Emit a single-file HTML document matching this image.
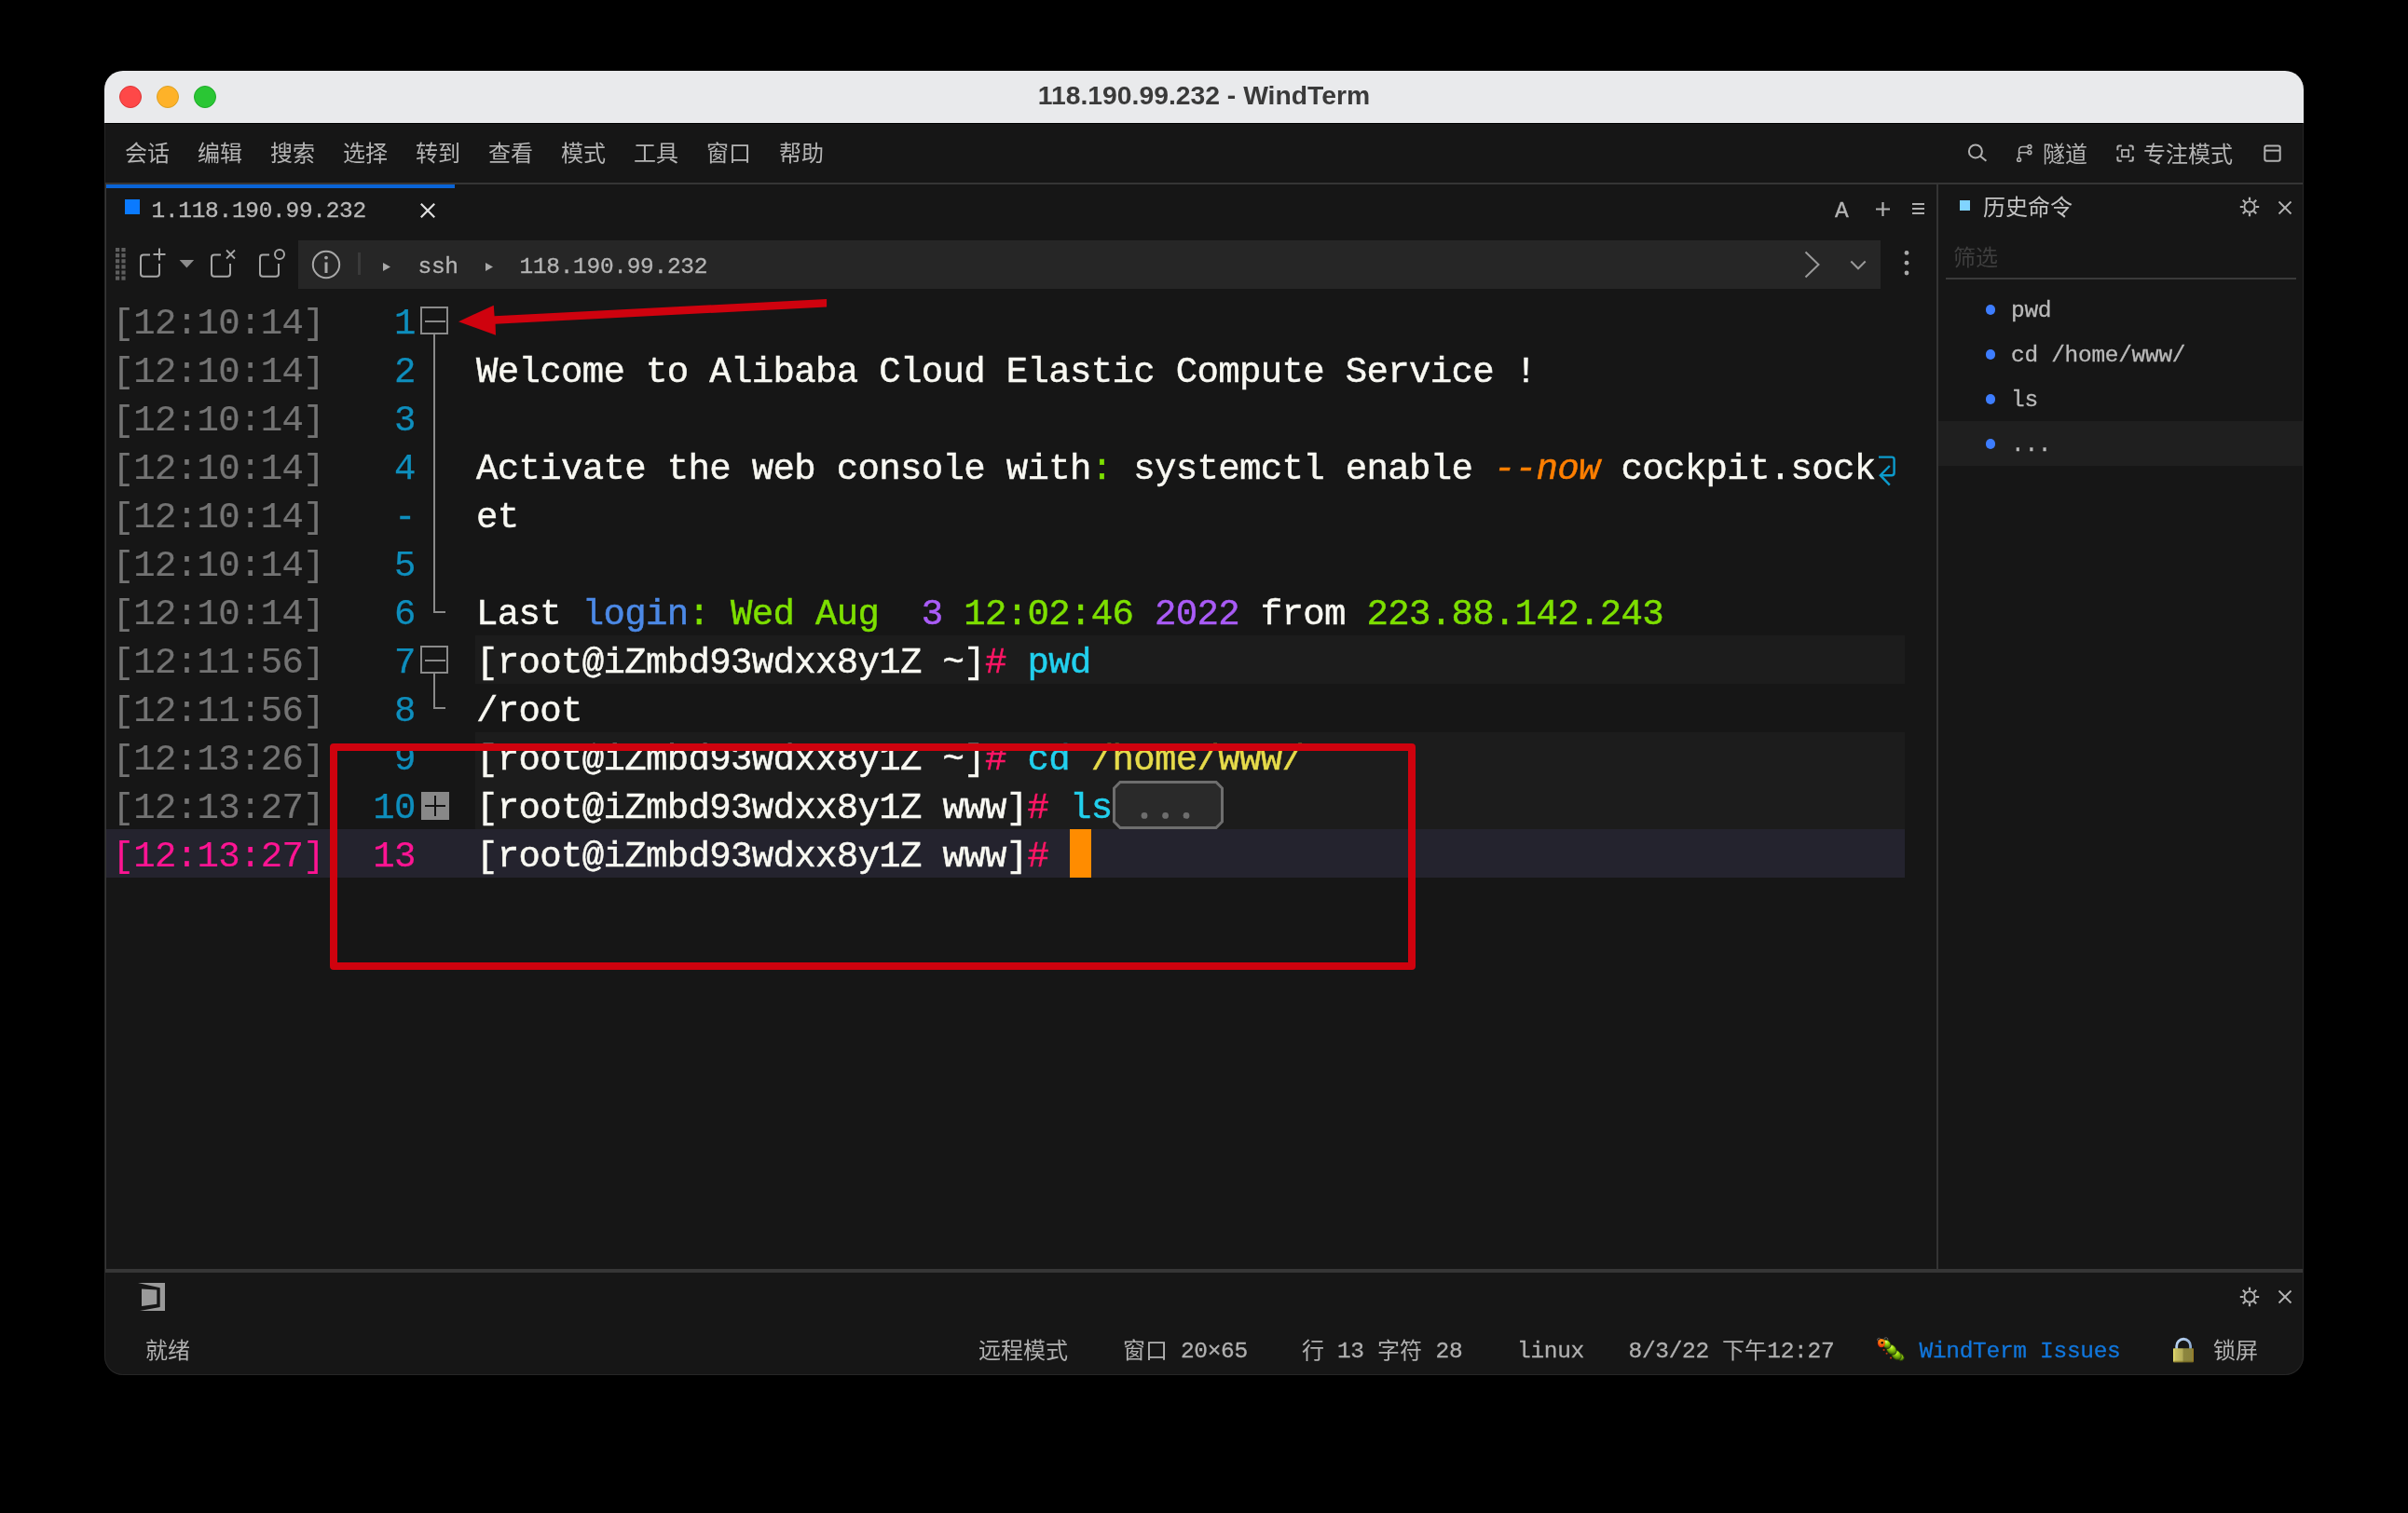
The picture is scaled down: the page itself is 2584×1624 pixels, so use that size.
<!DOCTYPE html>
<html lang="zh-CN"><head><meta charset="utf-8"><title>118.190.99.232 - WindTerm</title>
<style>
*{margin:0;padding:0;box-sizing:border-box}
html,body{width:2584px;height:1624px;background:#000;overflow:hidden}
body{position:relative;font-family:"Liberation Sans",sans-serif}
.abs,.win *{position:absolute}
.win{position:absolute;left:112px;top:76px;width:2360px;height:1400px;border-radius:20px;background:#161616;overflow:hidden}
.page{position:absolute;left:-112px;top:-76px;width:2584px;height:1624px;will-change:transform}
.titlebar{left:112px;top:76px;width:2360px;height:56px;background:#e9eaec}
.tl{width:24px;height:24px;border-radius:50%;top:92px}
.title{left:112px;top:76px;width:2360px;height:56px;line-height:53.5px;text-align:center;font-weight:bold;font-size:28.3px;color:#3a3a3a;white-space:pre}
.m{font-family:"Liberation Mono",monospace;white-space:pre}
.u{font-family:"Liberation Mono","Liberation Sans",sans-serif;font-size:24.5px;letter-spacing:-0.302px;white-space:pre;color:#b4b4b4;line-height:30px;height:30px;-webkit-text-stroke:0.3px}
.c{font-family:"Liberation Sans",sans-serif;font-size:24px;letter-spacing:0;-webkit-text-stroke:0;white-space:pre;color:#b4b4b4;line-height:30px;height:30px}
.u .c{position:static;display:inline}
.row{left:0;width:2584px;height:52px;line-height:52px;font-family:"Liberation Mono",monospace;font-size:39.0px;letter-spacing:-0.654px;white-space:pre;color:#f8f8f2;-webkit-text-stroke:0.5px}
.row span{position:static}
.row .ts{position:absolute;left:120.5px;top:3.5px;color:#737373;-webkit-text-stroke:0.2px}
.row .ln{position:absolute;right:2138.35px;top:3.5px;color:#0e8ebd;text-align:right;-webkit-text-stroke:0.25px}
.row .tx{position:absolute;left:511.0px;top:3.5px}
.bgp{left:510px;width:1534px;height:52px;background:#1c1c1c}
.bgc{left:114px;width:1930px;height:52px;background:#24232e}
.w{color:#f8f8f2} .g{color:#7ddf00} .b{color:#4c89e6} .p{color:#aa5cf7} .k{color:#ff1565} .cy{color:#22d0ee} .y{color:#e6db4a} .o{color:#ff7f00;font-style:italic}
.cur .ts,.cur .ln{color:#ff1493}
svg{overflow:visible}
</style></head>
<body>
<div class="win"><div class="page">
<div class="titlebar"></div>
<div style="left:112px;top:132px;width:2360px;height:1px;background:#000"></div>
<div class="tl" style="left:128px;background:#fe4848;border:1px solid #dc3434"></div>
<div class="tl" style="left:168px;background:#feb229;border:1px solid #dba024"></div>
<div class="tl" style="left:208px;background:#2ac634;border:1px solid #1daa28"></div>
<div class="title">118.190.99.232 - WindTerm</div>
<div class="c" style="left:134px;top:150px">会话</div>
<div class="c" style="left:212px;top:150px">编辑</div>
<div class="c" style="left:290px;top:150px">搜索</div>
<div class="c" style="left:368px;top:150px">选择</div>
<div class="c" style="left:446px;top:150px">转到</div>
<div class="c" style="left:524px;top:150px">查看</div>
<div class="c" style="left:602px;top:150px">模式</div>
<div class="c" style="left:680px;top:150px">工具</div>
<div class="c" style="left:758px;top:150px">窗口</div>
<div class="c" style="left:836px;top:150px">帮助</div>
<svg style="left:2108px;top:150px" width="30" height="30" viewBox="0 0 30 30" fill="none" stroke="#b0b0b0" stroke-width="2"><circle cx="11.9" cy="12.4" r="7"/><path d="M16.9 17.4L23.4 22.8"/></svg>
<svg style="left:2160px;top:150px" width="26" height="30" viewBox="0 0 26 30" fill="none" stroke="#b0b0b0" stroke-width="1.6"><circle cx="6.6" cy="21.4" r="1.9"/><circle cx="17.9" cy="7.5" r="1.9"/><circle cx="17.9" cy="13.7" r="1.9"/><path d="M6.6 19.5V11.5Q6.6 7.5 10.6 7.5H16M6.6 13.7H16"/></svg>
<div class="c" style="left:2192px;top:151px">隧道</div>
<svg style="left:2270px;top:154px" width="22" height="22" viewBox="0 0 22 22" fill="none" stroke="#b0b0b0" stroke-width="2"><path d="M6.8 2.4H3.9Q2.4 2.4 2.4 3.9V7.2M14.4 2.4H17.3Q18.8 2.4 18.8 3.9V7.2M6.8 18.7H3.9Q2.4 18.7 2.4 17.2V13.9M14.4 18.7H17.3Q18.8 18.7 18.8 17.2V13.9"/><rect x="7" y="7" width="7.2" height="7.2" stroke-width="1.8"/></svg>
<div class="c" style="left:2299.5px;top:151px">专注模式</div>
<svg style="left:2428px;top:154px" width="22" height="22" viewBox="0 0 22 22" fill="none" stroke="#b0b0b0" stroke-width="2"><rect x="2.3" y="2.4" width="16.4" height="16.4" rx="2"/><path d="M2.3 7.6H18.7"/></svg>
<div style="left:112px;top:196px;width:2360px;height:2px;background:#353535"></div>
<div style="left:114px;top:198px;width:374px;height:4px;background:#0a64d6"></div>
<div style="left:112px;top:198px;width:2px;height:1164px;background:#383838"></div>
<div style="left:134px;top:214px;width:16px;height:16px;background:#0a7aff"></div>
<div class="u" style="left:162.5px;top:211.5px;color:#b8b8b8">1.118.190.99.232</div>
<svg style="left:451px;top:218px" width="16" height="16" viewBox="0 0 16 16" stroke="#e0e0e0" stroke-width="2.2" fill="none"><path d="M0.8 0.8L15.2 15.2M15.2 0.8L0.8 15.2"/></svg>
<div class="u" style="left:1969px;top:211.5px">A</div>
<svg style="left:2013px;top:217px" width="15" height="15" viewBox="0 0 15 15" stroke="#b0b0b0" stroke-width="2.2" fill="none"><path d="M7.5 0V15M0 7.5H15"/></svg>
<svg style="left:2052px;top:217px" width="13" height="14" viewBox="0 0 13 14" stroke="#b0b0b0" stroke-width="2" fill="none"><path d="M0 2H13M0 7H13M0 12H13"/></svg>
<svg style="left:124px;top:266px" width="11" height="35" viewBox="0 0 11 35" fill="#5e5e5e"><rect x="0.0" y="0.0" width="4.2" height="4.2"/><rect x="6.4" y="0.0" width="4.2" height="4.2"/><rect x="0.0" y="6.1" width="4.2" height="4.2"/><rect x="6.4" y="6.1" width="4.2" height="4.2"/><rect x="0.0" y="12.2" width="4.2" height="4.2"/><rect x="6.4" y="12.2" width="4.2" height="4.2"/><rect x="0.0" y="18.3" width="4.2" height="4.2"/><rect x="6.4" y="18.3" width="4.2" height="4.2"/><rect x="0.0" y="24.4" width="4.2" height="4.2"/><rect x="6.4" y="24.4" width="4.2" height="4.2"/><rect x="0.0" y="30.5" width="4.2" height="4.2"/><rect x="6.4" y="30.5" width="4.2" height="4.2"/></svg>
<svg style="left:0;top:0" width="2584" height="400" viewBox="0 0 2584 400" fill="none" stroke="#a6a6a6" stroke-width="2">
<path d="M161 273.4H154Q151 273.4 151 276.4V293.8Q151 296.8 154 296.8H168Q171 296.8 171 293.8V283"/><path d="M171 266.5V279.5M164.5 273H177.5"/>
<path d="M237 273.4H230Q227 273.4 227 276.4V293.8Q227 296.8 230 296.8H244Q247 296.8 247 293.8V283"/><path d="M243 268.5L252 277.5M252 268.5L243 277.5" stroke-width="1.8"/>
<path d="M289 273.4H282Q279 273.4 279 276.4V293.8Q279 296.8 282 296.8H296Q299 296.8 299 293.8V283"/><circle cx="300" cy="273" r="5"/>
<path d="M192.6 279H208.2L200.4 287.4Z" fill="#8c8c8c" stroke="none"/>
</svg>
<div style="left:320px;top:258px;width:1698px;height:52px;background:#262626"></div>
<svg style="left:334px;top:268px" width="32" height="32" viewBox="0 0 32 32" fill="none" stroke="#a8a8a8" stroke-width="2"><circle cx="16" cy="16" r="14.2"/><path d="M16 13.5V25" stroke-width="3"/><circle cx="16" cy="8.6" r="1.9" fill="#a8a8a8" stroke="none"/></svg>
<div style="left:384px;top:271px;width:3px;height:24px;background:#3a3a3a"></div>
<svg style="left:411px;top:282px" width="8" height="9" viewBox="0 0 8 9" fill="#a8a8a8"><path d="M0 0L8 4.5L0 9Z"/></svg>
<div class="u" style="left:448.5px;top:271.5px">ssh</div>
<svg style="left:521px;top:282px" width="8" height="9" viewBox="0 0 8 9" fill="#a8a8a8"><path d="M0 0L8 4.5L0 9Z"/></svg>
<div class="u" style="left:557.5px;top:271.5px">118.190.99.232</div>
<svg style="left:1930px;top:264px" width="90" height="40" viewBox="1930 264 90 40" fill="none" stroke="#9a9a9a" stroke-width="2"><path d="M1937.5 270.5L1951.5 284L1937.5 297.5"/><path d="M1986.3 280.5L1994 288.3L2001.7 280.5"/></svg>
<svg style="left:2040px;top:266px" width="12" height="32" viewBox="2040 266 12 32" fill="#a8a8a8"><circle cx="2046" cy="271.4" r="2.4"/><circle cx="2046" cy="282.2" r="2.4"/><circle cx="2046" cy="293" r="2.4"/></svg>
<div class="bgp" style="top:682px"></div>
<div class="bgp" style="top:786px"></div>
<div class="bgp" style="top:838px"></div>
<div class="bgc" style="top:890px"></div>
<div class="row" style="top:318px"><span class="ts">[12:10:14]</span><span class="ln">1</span><span class="tx"></span></div>
<div class="row" style="top:370px"><span class="ts">[12:10:14]</span><span class="ln">2</span><span class="tx">Welcome to Alibaba Cloud Elastic Compute Service !</span></div>
<div class="row" style="top:422px"><span class="ts">[12:10:14]</span><span class="ln">3</span><span class="tx"></span></div>
<div class="row" style="top:474px"><span class="ts">[12:10:14]</span><span class="ln">4</span><span class="tx">Activate the web console with<span class="g">:</span> systemctl enable <span class="o">--now</span> cockpit.sock</span></div>
<div class="row" style="top:526px"><span class="ts">[12:10:14]</span><span class="ln">-</span><span class="tx">et</span></div>
<div class="row" style="top:578px"><span class="ts">[12:10:14]</span><span class="ln">5</span><span class="tx"></span></div>
<div class="row" style="top:630px"><span class="ts">[12:10:14]</span><span class="ln">6</span><span class="tx">Last <span class="b">login</span><span class="g">:</span> <span class="g">Wed Aug</span>  <span class="p">3</span> <span class="g">12:02:46</span> <span class="p">2022</span> from <span class="g">223.88.142.243</span></span></div>
<div class="row" style="top:682px"><span class="ts">[12:11:56]</span><span class="ln">7</span><span class="tx">[root@iZmbd93wdxx8y1Z ~]<span class="k">#</span> <span class="cy">pwd</span></span></div>
<div class="row" style="top:734px"><span class="ts">[12:11:56]</span><span class="ln">8</span><span class="tx">/root</span></div>
<div class="row" style="top:786px"><span class="ts">[12:13:26]</span><span class="ln">9</span><span class="tx">[root@iZmbd93wdxx8y1Z ~]<span class="k">#</span> <span class="cy">cd</span> <span class="y">/home/www/</span></span></div>
<div class="row" style="top:838px"><span class="ts">[12:13:27]</span><span class="ln">10</span><span class="tx">[root@iZmbd93wdxx8y1Z www]<span class="k">#</span> <span class="cy">ls</span></span></div>
<div class="row cur" style="top:890px"><span class="ts">[12:13:27]</span><span class="ln">13</span><span class="tx">[root@iZmbd93wdxx8y1Z www]<span class="k">#</span> </span></div>
<div style="left:1148px;top:890px;width:23px;height:52px;background:#ff8c00"></div>
<svg style="left:0;top:0" width="2584" height="1000" viewBox="0 0 2584 1000" fill="none" stroke="#8a8a8a" stroke-width="2">
<rect x="452" y="330" width="28" height="28"/><path d="M456 345H478"/>
<path d="M466 359V657H478"/>
<rect x="452" y="694" width="28" height="28"/><path d="M456 709H478"/>
<path d="M466 723V760H478"/>
<rect x="452" y="850" width="30" height="30" fill="#888" stroke="none"/><path d="M456 865H478M467 854V876" stroke="#111"/>
</svg>
<svg style="left:2010px;top:484px" width="30" height="42" viewBox="2010 484 30 42" fill="none" stroke="#0c9bcc" stroke-width="2.4"><path d="M2016 490.6H2030Q2032.6 490.6 2032.6 493.2V507.6Q2032.6 510.2 2030 510.2H2018.4"/><path d="M2027.8 500L2017.8 510.2L2027.8 520.6"/></svg>
<svg style="left:1190px;top:836px" width="128" height="56" viewBox="1190 836 128 56"><path d="M1202 839.5H1305L1311.5 846V882L1305 888.5H1202L1195.5 882V846Z" fill="#2a2a2a" stroke="#6e6e6e" stroke-width="3"/><circle cx="1228" cy="875.4" r="3.4" fill="#6e6e6e"/><circle cx="1250.6" cy="875.4" r="3.4" fill="#6e6e6e"/><circle cx="1273" cy="875.4" r="3.4" fill="#6e6e6e"/></svg>
<svg style="left:480px;top:310px" width="420" height="60" viewBox="480 310 420 60"><path d="M492 345.2L529.8 327.7L530.6 339.2L887.1 321.1V329.5L531.6 347.7L532 359.8Z" fill="#cf020e"/></svg>
<div style="left:354px;top:798px;width:1165px;height:243px;border:8px solid #cf020e;border-radius:4px"></div>
<div style="left:2078px;top:198px;width:2px;height:1164px;background:#343434"></div>
<div style="left:2103px;top:215px;width:11px;height:11px;background:#80d4ff"></div>
<div class="c" style="left:2128px;top:208px;color:#c4c4c4">历史命令</div>
<svg style="left:2401.8px;top:210.4px" width="24" height="24" viewBox="2401.8 210.4 24 24" fill="none" stroke="#b4b4b4"><circle cx="2413.8" cy="222.4" r="5.6" stroke-width="1.9"/><path d="M2420.40 222.40L2424.00 222.40M2418.47 227.07L2421.01 229.61M2413.80 229.00L2413.80 232.60M2409.13 227.07L2406.59 229.61M2407.20 222.40L2403.60 222.40M2409.13 217.73L2406.59 215.19M2413.80 215.80L2413.80 212.20M2418.47 217.73L2421.01 215.19" stroke-width="2.2"/></svg>
<svg style="left:2444.4px;top:214.7px" width="16" height="16" viewBox="2444.4 214.7 16 16" fill="none" stroke="#b4b4b4" stroke-width="1.8"><path d="M2445.9 216.2L2458.9 229.2M2458.9 216.2L2445.9 229.2"/></svg>
<div class="c" style="left:2096px;top:261.5px;color:#3e3e3e">筛选</div>
<div style="left:2088px;top:297.5px;width:376px;height:2px;background:#3a3a3a"></div>
<div style="left:2080px;top:452px;width:392px;height:48px;background:#1f1f1f"></div>
<div style="left:2131px;top:327.2px;width:10.4px;height:10.4px;border-radius:50%;background:#3d7dff"></div>
<div class="u" style="left:2158px;top:318.5px;color:#bababa">pwd</div>
<div style="left:2131px;top:375.2px;width:10.4px;height:10.4px;border-radius:50%;background:#3d7dff"></div>
<div class="u" style="left:2158px;top:366.5px;color:#bababa">cd /home/www/</div>
<div style="left:2131px;top:423.2px;width:10.4px;height:10.4px;border-radius:50%;background:#3d7dff"></div>
<div class="u" style="left:2158px;top:414.5px;color:#bababa">ls</div>
<div style="left:2131px;top:471.2px;width:10.4px;height:10.4px;border-radius:50%;background:#3d7dff"></div>
<div class="u" style="left:2158px;top:462.5px;color:#bababa">...</div>
<div style="left:112px;top:1362px;width:2360px;height:4px;background:#363636"></div>
<svg style="left:146px;top:1375px" width="34" height="34" viewBox="146 1375 34 34"><path d="M148 1377H177V1407H150L171.7 1403V1382.3Z" fill="#9a9a9a"/><path d="M152 1383.5L168.3 1384.6V1399.8L152 1402Z" fill="#9a9a9a"/></svg>
<svg style="left:2401.8px;top:1380px" width="24" height="24" viewBox="2401.8 1380 24 24" fill="none" stroke="#b4b4b4"><circle cx="2413.8" cy="1392" r="5.6" stroke-width="1.9"/><path d="M2420.40 1392.00L2424.00 1392.00M2418.47 1396.67L2421.01 1399.21M2413.80 1398.60L2413.80 1402.20M2409.13 1396.67L2406.59 1399.21M2407.20 1392.00L2403.60 1392.00M2409.13 1387.33L2406.59 1384.79M2413.80 1385.40L2413.80 1381.80M2418.47 1387.33L2421.01 1384.79" stroke-width="2.2"/></svg>
<svg style="left:2444.3px;top:1384.3px" width="16" height="16" viewBox="2444.3 1384.3 16 16" fill="none" stroke="#b4b4b4" stroke-width="1.8"><path d="M2445.8 1385.8L2458.8 1398.8M2458.8 1385.8L2445.8 1398.8"/></svg>
<div class="c" style="left:156px;top:1435px;color:#b0b0b0">就绪</div>
<div class="c" style="left:1050px;top:1435px;color:#b0b0b0">远程模式</div>
<div class="c" style="left:1204.5px;top:1435px;color:#b0b0b0">窗口</div>
<div class="u" style="left:1266.9px;top:1436px;color:#b0b0b0">20×65</div>
<div class="c" style="left:1396.5px;top:1435px;color:#b0b0b0">行</div>
<div class="u" style="left:1434.9px;top:1436px;color:#b0b0b0">13</div>
<div class="c" style="left:1478.1px;top:1435px;color:#b0b0b0">字符</div>
<div class="u" style="left:1540.5px;top:1436px;color:#b0b0b0">28</div>
<div class="u" style="left:1628px;top:1436px;color:#b0b0b0">linux</div>
<div class="u" style="left:1747.5px;top:1436px;color:#b0b0b0">8/3/22</div>
<div class="c" style="left:1848.3px;top:1435px;color:#b0b0b0">下午</div>
<div class="u" style="left:1896.3px;top:1436px;color:#b0b0b0">12:27</div>
<svg style="left:2010px;top:1430px" width="38" height="36" viewBox="2010 1430 38 36">
<defs>
<radialGradient id="bg1" cx="0.68" cy="0.28" r="0.8"><stop offset="0" stop-color="#e4f89a"/><stop offset="0.25" stop-color="#aaea10"/><stop offset="0.65" stop-color="#6aa00a"/><stop offset="1" stop-color="#2e4a06"/></radialGradient>
<radialGradient id="bh1" cx="0.55" cy="0.3" r="0.75"><stop offset="0" stop-color="#ffa012"/><stop offset="0.5" stop-color="#f5700c"/><stop offset="1" stop-color="#d8140c"/></radialGradient>
</defs>
<path d="M2016.3 1439.8q-2.800-1.300-1.400-2.900q1.700-1.500 3.300 0.700M2021.600 1438.300q0.200-3 2.700-2.600q2.300 0.600 1.400 3.100" fill="none" stroke="#6a6a6a" stroke-width="0.9"/>
<g fill="#c03410"><circle cx="2021.600" cy="1449" r="1.100"/><circle cx="2024.600" cy="1452.800" r="1.050"/><circle cx="2029" cy="1457.500" r="1.100"/></g>
<g fill="url(#bg1)" stroke="#22340a" stroke-width="0.700">
<ellipse cx="2039.200" cy="1456.600" rx="3.500" ry="4.500" transform="rotate(-40 2039.200 1456.600)"/>
<ellipse cx="2035" cy="1454.400" rx="4.600" ry="6" transform="rotate(-44 2035 1454.400)"/>
<ellipse cx="2029.700" cy="1448.600" rx="4.800" ry="6.200" transform="rotate(-44 2029.700 1448.600)"/>
<ellipse cx="2024.400" cy="1442.800" rx="4.200" ry="5.200" transform="rotate(-44 2024.400 1442.800)"/>
</g>
<ellipse cx="2018.900" cy="1441.600" rx="4" ry="4.700" fill="url(#bh1)"/>
<circle cx="2019.700" cy="1441.200" r="1.250" fill="#0a0a0a"/>
</svg>
<div class="u" style="left:2059.5px;top:1436px;color:#1177dd">WindTerm Issues</div>
<svg style="left:2328px;top:1432px" width="32" height="34" viewBox="2328 1432 32 34">
<defs>
<linearGradient id="lk1" x1="2332" y1="0" x2="2354" y2="0" gradientUnits="userSpaceOnUse"><stop offset="0" stop-color="#ebe36e"/><stop offset="0.12" stop-color="#c9c163"/><stop offset="0.46" stop-color="#b3ab58"/><stop offset="0.5" stop-color="#8d873f"/><stop offset="0.9" stop-color="#8a823c"/><stop offset="1" stop-color="#9c7a1e"/></linearGradient>
<linearGradient id="lk2" x1="2334" y1="1436" x2="2352" y2="1448" gradientUnits="userSpaceOnUse"><stop offset="0" stop-color="#c6e0fb"/><stop offset="1" stop-color="#86a3cc"/></linearGradient>
</defs>
<path d="M2335.700 1448.500V1444.700a7.450 7.450 0 0 1 14.900 0V1448.500" fill="none" stroke="url(#lk2)" stroke-width="2.800"/>
<rect x="2332" y="1447.200" width="22" height="15" rx="0.800" fill="url(#lk1)"/>
<rect x="2332" y="1460.700" width="22" height="1.500" rx="0.700" fill="#6e5c14" opacity="0.550"/>
</svg>
<div class="c" style="left:2375px;top:1435px;color:#b0b0b0">锁屏</div>
</div></div>
<div class="abs" style="left:112px;top:132px;width:2360px;height:1344px;border:1px solid #262626;border-top:none;border-radius:0 0 20px 20px;pointer-events:none"></div>
</body></html>
